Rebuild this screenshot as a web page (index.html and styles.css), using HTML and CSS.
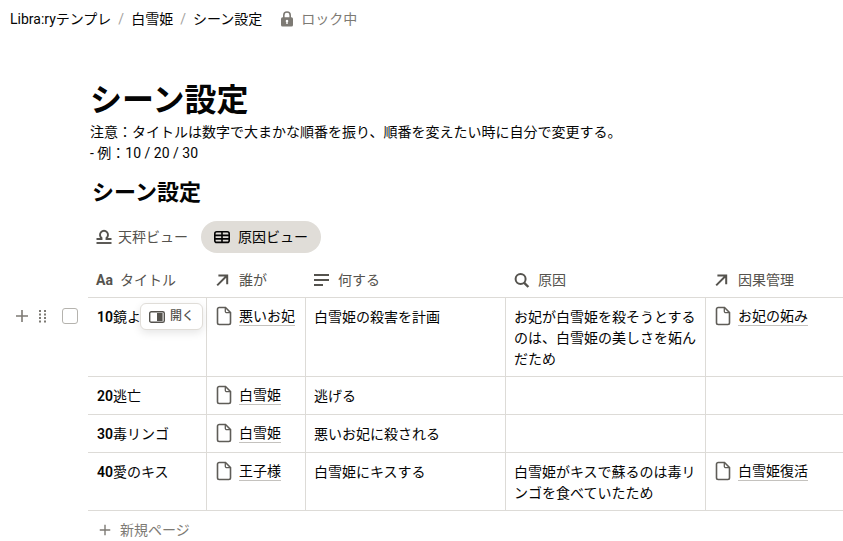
FILE: index.html
```html
<!DOCTYPE html>
<html lang="ja">
<head>
    <meta charset="UTF-8">
    <meta name="viewport" content="width=device-width, initial-scale=1.0">
    <title>シーン設定</title>
    <link rel="stylesheet" href="styles.css">
</head>
<body>
    <!-- Shared icons -->
    <svg class="sprite" aria-hidden="true">
        <symbol id="icon-page" viewBox="0 0 16 20">
            <path d="M3.5 1.5h6l5 5v10.3a1.7 1.7 0 0 1-1.7 1.7H3.2a1.7 1.7 0 0 1-1.7-1.7V3.2a1.7 1.7 0 0 1 1.7-1.7z" fill="none" stroke="currentColor" stroke-width="1.6"/>
            <path d="M9.3 1.6v3.6a1.5 1.5 0 0 0 1.5 1.5h3.6" fill="none" stroke="currentColor" stroke-width="1.3"/>
        </symbol>
        <symbol id="icon-arrow" viewBox="0 0 18 16">
            <path d="M2.2 13.4L11.8 3.8M3.4 3.4h8.8v8.8" fill="none" stroke="currentColor" stroke-width="2"/>
        </symbol>
        <symbol id="icon-plus" viewBox="0 0 16 16">
            <path d="M8 2v12M2 8h12" fill="none" stroke="currentColor" stroke-width="1.6"/>
        </symbol>
    </svg>

    <header class="topbar">
        <nav class="breadcrumb">
            <a href="#">Libra:ryテンプレ</a>
            <span class="slash">/</span>
            <a href="#">白雪姫</a>
            <span class="slash">/</span>
            <a href="#">シーン設定</a>
        </nav>
        <button class="lock">
            <svg width="14" height="16" viewBox="0 0 14 16">
                <path d="M3.8 7V4.2a3.2 3.2 0 0 1 6.4 0V7" fill="none" stroke="currentColor" stroke-width="1.6"/>
                <rect x="1" y="6.3" width="12" height="9.2" rx="1.6" fill="currentColor"/>
                <path d="M7 8.8a1.3 1.3 0 0 1 .7 2.4v1.7H6.3v-1.7A1.3 1.3 0 0 1 7 8.8z" fill="#fff"/>
            </svg>
            ロック中
        </button>
    </header>

    <main>
        <div class="intro">
            <h1>シーン設定</h1>
            <p>注意：タイトルは数字で大まかな順番を振り、順番を変えたい時に自分で変更する。</p>
            <p>- 例：10 / 20 / 30</p>
            <h2>シーン設定</h2>
        </div>

        <div class="views">
            <button class="view">
                <svg width="16" height="16" viewBox="0 0 16 16" fill="none" stroke="currentColor" stroke-width="1.9">
                    <path d="M0.5 10h5V8.900a4 4 0 1 1 5 0v1.100h5"/>
                    <path d="M0.5 14h15"/>
                </svg>
                天秤ビュー
            </button>
            <button class="view active">
                <svg width="16" height="16" viewBox="0 0 16 16" fill="none" stroke="currentColor" stroke-width="1.6">
                    <rect x="0.8" y="2.8" width="14.4" height="10.6" rx="2"/>
                    <path d="M1 6.4h14M1 9.9h14M8 3v10.2"/>
                </svg>
                原因ビュー
            </button>
        </div>

        <table class="scenes">
            <colgroup>
                <col class="col-gutter">
                <col class="col-title">
                <col class="col-who">
                <col class="col-text">
                <col class="col-text">
                <col>
            </colgroup>
            <thead>
                <tr>
                    <td class="gutter"></td>
                    <th><span class="prop"><b class="aa">Aa</b>タイトル</span></th>
                    <th><span class="prop"><svg width="18" height="16"><use href="#icon-arrow"/></svg>誰が</span></th>
                    <th>
                        <span class="prop">
                            <svg width="18" height="16" viewBox="0 0 18 16"><path d="M0 3h15M0 8h15M0 13h9" stroke="currentColor" stroke-width="1.8"/></svg>
                            何する
                        </span>
                    </th>
                    <th>
                        <span class="prop">
                            <svg width="18" height="16" viewBox="0 0 18 16" fill="none" stroke="currentColor"><circle cx="6.6" cy="7" r="5" stroke-width="2"/><path d="M10.2 10.8l4.2 4.2" stroke-width="2.4"/></svg>
                            原因
                        </span>
                    </th>
                    <th><span class="prop"><svg width="18" height="16"><use href="#icon-arrow"/></svg>因果管理</span></th>
                </tr>
            </thead>
            <tbody>
                <tr>
                    <td class="gutter">
                        <div class="row-tools">
                            <button class="tool" aria-label="追加"><svg width="16" height="16"><use href="#icon-plus"/></svg></button>
                            <button class="tool" aria-label="移動">
                                <svg width="8" height="14" viewBox="0 0 8 14" fill="currentColor">
                                    <path d="M0 1h2v2H0zM5 1h2v2H5zM0 4.5h2v2H0zM5 4.5h2v2H5zM0 8h2v2H0zM5 8h2v2H5zM0 11.5h2v2H0zM5 11.5h2v2H5z"/>
                                </svg>
                            </button>
                            <input type="checkbox" aria-label="行を選択">
                        </div>
                    </td>
                    <td class="title">
                        <b>10</b>鏡よ
                        <button class="open">
                            <svg width="16" height="12" viewBox="0 0 16 12">
                                <rect x="0.7" y="0.7" width="14.6" height="10.6" rx="1.6" fill="none" stroke="currentColor" stroke-width="1.4"/>
                                <path d="M8 2h5.6v8H8z" fill="currentColor"/>
                            </svg>
                            開く
                        </button>
                    </td>
                    <td><a class="relation" href="#"><svg width="16" height="20"><use href="#icon-page"/></svg><span>悪いお妃</span></a></td>
                    <td>白雪姫の殺害を計画</td>
                    <td>お妃が白雪姫を殺そうとするのは、白雪姫の美しさを妬んだため</td>
                    <td><a class="relation" href="#"><svg width="16" height="20"><use href="#icon-page"/></svg><span>お妃の妬み</span></a></td>
                </tr>
                <tr>
                    <td class="gutter"></td>
                    <td class="title"><b>20</b>逃亡</td>
                    <td><a class="relation" href="#"><svg width="16" height="20"><use href="#icon-page"/></svg><span>白雪姫</span></a></td>
                    <td>逃げる</td>
                    <td></td>
                    <td></td>
                </tr>
                <tr>
                    <td class="gutter"></td>
                    <td class="title"><b>30</b>毒リンゴ</td>
                    <td><a class="relation" href="#"><svg width="16" height="20"><use href="#icon-page"/></svg><span>白雪姫</span></a></td>
                    <td>悪いお妃に殺される</td>
                    <td></td>
                    <td></td>
                </tr>
                <tr>
                    <td class="gutter"></td>
                    <td class="title"><b>40</b>愛のキス</td>
                    <td><a class="relation" href="#"><svg width="16" height="20"><use href="#icon-page"/></svg><span>王子様</span></a></td>
                    <td>白雪姫にキスする</td>
                    <td>白雪姫がキスで蘇るのは毒リンゴを食べていたため</td>
                    <td><a class="relation" href="#"><svg width="16" height="20"><use href="#icon-page"/></svg><span>白雪姫復活</span></a></td>
                </tr>
            </tbody>
        </table>

        <button class="new-page">
            <svg width="14" height="14"><use href="#icon-plus"/></svg>
            新規ページ
        </button>
    </main>
</body>
</html>
```
FILE: styles.css
```css
* {
    box-sizing: border-box;
}

body {
    margin: 0;
    background-color: #fff;
    color: #040404;
    font-family: Roboto, "Noto Sans CJK JP", sans-serif;
    font-size: 14px;
    line-height: 21px;
}

a {
    color: inherit;
    text-decoration: none;
}

button {
    display: flex;
    align-items: center;
    padding: 0;
    border: none;
    background: none;
    font: inherit;
    color: inherit;
    cursor: pointer;
    white-space: nowrap;
}

svg {
    flex-shrink: 0;
}

.sprite {
    display: none;
}

/* Top bar */
.topbar {
    display: flex;
    align-items: center;
    gap: 18px;
    height: 38px;
    padding: 0 10px;
}

.breadcrumb {
    display: flex;
    gap: 7px;
}

.slash {
    color: #a5a39e;
}

.lock {
    gap: 7px;
    color: #7d7a74;
}

/* Page heading */
.intro {
    padding: 41px 16px 0 90px;
}

h1,
h2,
p {
    margin: 0;
}

h1 {
    font-size: 32px;
    line-height: 43px;
}

h2 {
    margin-top: 12px;
    padding-left: 2px;
    font-size: 22px;
    line-height: 34px;
}

/* View tabs */
.views {
    display: flex;
    padding: 11px 0 0 83px;
}

.view {
    gap: 6px;
    height: 32px;
    padding: 0 13px;
    border-radius: 16px;
    color: #55534e;
}

.view.active {
    gap: 8px;
    background-color: #e0ddd8;
    color: #040404;
}

/* Scene table */
.scenes {
    width: 100%;
    margin-top: 10px;
    border-collapse: separate;
    border-spacing: 0;
    table-layout: fixed;
}

.col-gutter {
    width: 88px;
}

.col-title {
    width: 119px;
}

.col-who {
    width: 99px;
}

.col-text {
    width: 200px;
}

.scenes th {
    height: 35px;
    padding: 0 8px;
    border-bottom: 1px solid #dddbd7;
    color: #55534e;
    font-weight: 400;
    text-align: left;
}

.prop {
    display: flex;
    align-items: center;
    gap: 6px;
    white-space: nowrap;
}

.aa {
    width: 18px;
}

.scenes td {
    position: relative;
    padding: 9px 8px 6px;
    border-right: 1px solid #dddbd7;
    border-bottom: 1px solid #dddbd7;
    vertical-align: top;
}

.scenes td:last-child {
    border-right: none;
}

.scenes .gutter {
    padding: 8px 10px 7px 14px;
    border: none;
}

.scenes .title {
    padding-left: 9px;
}

.title b {
    font-weight: 600;
}

.relation {
    display: flex;
    align-items: flex-end;
    gap: 7px;
    height: 20px;
    margin: -1px 0 3px;
    padding-left: 1px;
    white-space: nowrap;
}

.relation svg {
    color: #5f5d58;
}

.relation span {
    border-bottom: 1px solid #c4c2be;
    line-height: 17px;
}

/* Controls shown beside the hovered row */
.row-tools {
    display: flex;
    align-items: center;
    gap: 9px;
    height: 20px;
}

.tool {
    color: #7d7a74;
}

.row-tools input {
    appearance: none;
    width: 16px;
    height: 16px;
    margin: 0 0 0 auto;
    border: 1px solid #b5b3ae;
    border-radius: 3px;
}

.open {
    position: absolute;
    top: 5px;
    right: 3px;
    gap: 5px;
    height: 27px;
    padding: 0 8px;
    border: 1px solid #e0ddd8;
    border-radius: 6px;
    background-color: #fff;
    box-shadow: 0 3px 8px rgba(0, 0, 0, 0.1);
    color: #55534e;
    font-size: 12px;
    font-weight: 500;
}

.new-page {
    gap: 8px;
    height: 38px;
    margin-left: 98px;
    color: #7d7a74;
}
```
